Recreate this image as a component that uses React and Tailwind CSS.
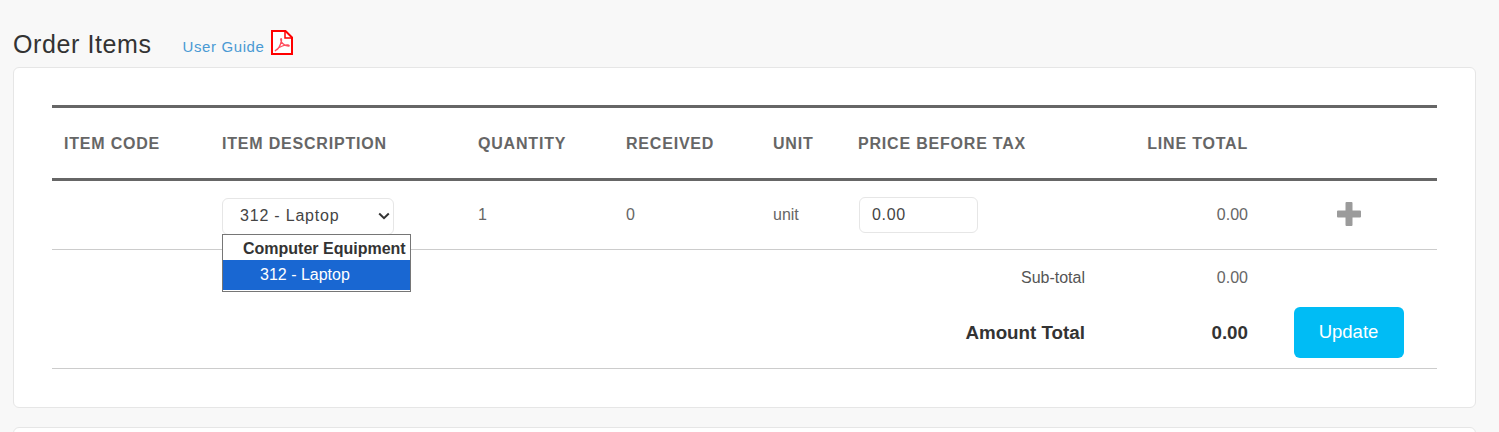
import React from "react";

const grid = "grid grid-cols-[158px_256px_148px_147px_85px_251px_163px_177px]";

function PdfIcon() {
  return (
    <svg width="22" height="25" viewBox="0 0 22 25" fill="none" className="block">
      <path d="M1 1H14.5L21 7.5V24H1Z" stroke="#ff0000" strokeWidth="2" fill="#fff" />
      <path d="M14 1V8H21" stroke="#ff0000" strokeWidth="1.5" fill="none" />
      <path d="M4.5 20.5C7 19.5 9.5 15 10.5 10.500C10.8 8.500 10 8 9.700 9.500C9.600 12 12.500 15.500 17.500 16.200C18.500 16.300 18.500 15.200 17 15C13.500 14.700 8 17 5 20C4.300 20.800 4 21 4.500 20.500Z" stroke="#ff4d5e" strokeWidth="1.3" fill="none" />
    </svg>
  );
}

export default function App() {
  return (
    <div className="min-h-[432px] h-[432px] overflow-hidden bg-[#f8f8f8] font-['Liberation_Sans',Arial,sans-serif] text-[#333]">
      <div className="flex items-end pl-[13px] pt-[29px] h-[67px] pb-[8px]">
        <h2 className="text-[25px] leading-[30px] tracking-[0.6px] text-[#333] font-normal">Order Items</h2>
        <a className="ml-[31px] text-[15px] leading-[20px] tracking-[0.6px] text-[#4a9ad4] mb-[2px]">User Guide</a>
        <span className="ml-[7px] mb-[4px]"><PdfIcon /></span>
      </div>

      <div className="mx-[13px] w-[1463px] h-[341px] bg-white border border-[#e6e6e6] rounded-[6px] pt-[37px] pl-[38px] pr-[38px]">
        <div className="w-[1385px]">
          <div className={`${grid} h-[76px] pt-[2px] items-center border-t-[3px] border-b-[3px] border-[#666] text-[16px] font-bold tracking-[0.8px] text-[#666]`}>
            <div className="px-3">ITEM CODE</div>
            <div className="px-3">ITEM DESCRIPTION</div>
            <div className="px-3">QUANTITY</div>
            <div className="px-3">RECEIVED</div>
            <div className="px-3">UNIT</div>
            <div className="px-3">PRICE BEFORE TAX</div>
            <div className="px-3 text-right">LINE TOTAL</div>
            <div />
          </div>

          <div className={`${grid} h-[69px] border-b border-[#ccc] text-[16px] leading-[24px] text-[#666]`}>
            <div />
            <div className="relative px-3 pt-[17px]">
              <div className="flex items-center justify-between w-[172px] h-[37px] pb-[2px] border border-[#e6e6e6] rounded-[6px] bg-white pl-[17px] pr-[3px] text-[#444] tracking-[0.8px]">
                <span>312 - Laptop</span>
                <svg width="12" height="8" viewBox="0 0 12 8" fill="none">
                  <path d="M1.2 1.5L6 6.2L10.8 1.500" stroke="#333" strokeWidth="2" />
                </svg>
              </div>
              <div className="absolute left-[12px] top-[53px] z-10 w-[189px] h-[58px] bg-white border border-[#767676] text-[16px] tracking-normal">
                <div className="h-[25px] leading-[28px] pl-[20px] font-bold text-[#333] whitespace-nowrap">Computer Equipment</div>
                <div className="h-[30px] leading-[30px] pl-[37px] bg-[#1967d2] text-white">312 - Laptop</div>
              </div>
            </div>
            <div className="px-3 pt-[22px]">1</div>
            <div className="px-3 pt-[22px]">0</div>
            <div className="px-3 pt-[22px]">unit</div>
            <div className="px-[13px] pt-[16px]">
              <div className="w-[119px] h-[36px] border border-[#e6e6e6] rounded-[6px] pl-[12px] leading-[33px] text-[#444] text-[16px] tracking-[0.7px]">0.00</div>
            </div>
            <div className="px-3 pt-[22px] text-right">0.00</div>
            <div className="flex justify-center pt-[21px]">
              <svg width="24" height="24" viewBox="0 0 24 24">
                <path d="M8.500 1a1 1 0 0 1 1-1h5a1 1 0 0 1 1 1v7.500h7.500a1 1 0 0 1 1 1v5a1 1 0 0 1-1 1h-7.500v7.500a1 1 0 0 1-1 1h-5a1 1 0 0 1-1-1v-7.500H1a1 1 0 0 1-1-1v-5a1 1 0 0 1 1-1h7.500Z" fill="#9b9b9b" />
              </svg>
            </div>
          </div>

          <div className={`${grid} h-[57px] pt-[16px] text-[16px] leading-[24px] items-start`}>
            <div className="col-span-6 px-3 text-right text-[#555]">Sub-total</div>
            <div className="px-3 text-right text-[#666]">0.00</div>
            <div />
          </div>

          <div className={`${grid} h-[62px] border-b border-[#ccc] items-start`}>
            <div className="col-span-6 px-3 pt-[12px] leading-[27px] text-right text-[18.8px] font-bold text-[#333]">Amount Total</div>
            <div className="px-3 pt-[12px] leading-[27px] text-right text-[18.8px] font-bold text-[#333]">0.00</div>
            <div className="flex justify-center">
              <button className="w-[110px] h-[51px] pb-[2px] rounded-[6px] bg-[#00bcf5] text-white text-[18.5px]">Update</button>
            </div>
          </div>
        </div>
      </div>

      <div className="mx-[13px] mt-[19px] w-[1463px] h-[40px] bg-white border border-[#e6e6e6] rounded-[6px]" />
    </div>
  );
}
